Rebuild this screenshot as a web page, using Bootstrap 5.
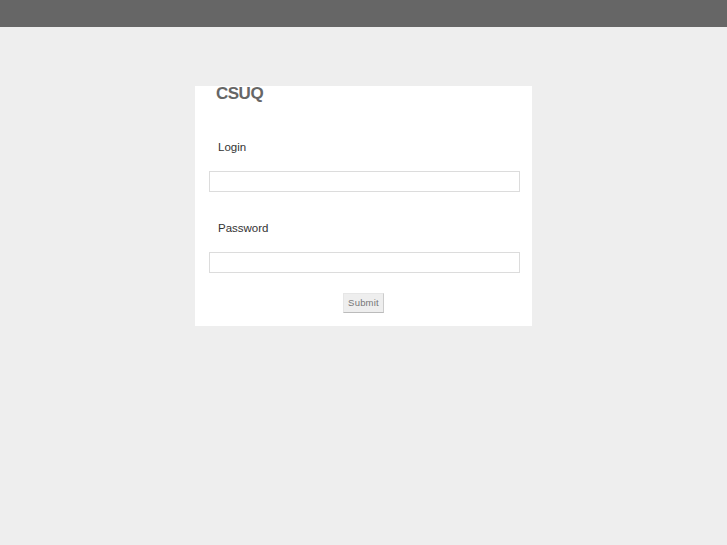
<!DOCTYPE html>
<html lang="en">
<head>
    <meta charset="UTF-8">
    <title>CSUQ Login</title>
    <link href="https://cdn.jsdelivr.net/npm/bootstrap@5.3.0/dist/css/bootstrap.min.css" rel="stylesheet">
    <style>
        body { background: #eeeeee; font-family: "Liberation Sans", sans-serif; height: 545px; overflow: hidden; }
        .topstrip { height: 27px; background-color: #666; background-image: radial-gradient(#5f5f5f 0.6px, transparent 0.7px); background-size: 2px 2px; }
        .login-box { width: 337px; height: 240px; margin: 59px 0 0 195px; background: #fff; padding: 0 12px 0 14px; }
        .brand { font-weight: 700; font-size: 17px; line-height: 16px; color: #666; padding-left: 7px; letter-spacing: -0.5px; }
        .field-label { font-size: 11.5px; line-height: 16px; color: #333; padding-left: 9px; margin: 0; }
        .field-input { display: block; width: 100%; height: 21px; border: 1px solid #dcdcdc; border-radius: 0; padding: 0 4px; background: #fff; }
        .first-label { margin-top: 37px; }
        .second-label { margin-top: 28px; }
        .field-input.mt-one { margin-top: 16px; }
        .submit-row { margin-right: 2px; }
        .submit-btn { font-size: 9.5px; line-height: 12px; color: #777; width: 41px; height: 20px; padding: 0; background: #eee; border: 1px solid #e6e6e6; border-bottom-color: #bbb; border-right-color: #ccc; border-radius: 0; letter-spacing: 0.2px; }
    </style>
</head>
<body>
    <div class="topstrip"></div>
    <div class="login-box">
        <div class="brand">CSUQ</div>
        <form onsubmit="return false">
            <label class="field-label first-label d-block" for="login">Login</label>
            <input class="field-input mt-one" type="text" id="login">
            <label class="field-label second-label d-block" for="password">Password</label>
            <input class="field-input mt-one" type="password" id="password">
            <div class="d-flex justify-content-center mt-3 pt-1 submit-row">
                <button class="btn submit-btn" type="submit">Submit</button>
            </div>
        </form>
    </div>
    <script src="https://cdn.jsdelivr.net/npm/bootstrap@5.3.0/dist/js/bootstrap.bundle.min.js"></script>
</body>
</html>
